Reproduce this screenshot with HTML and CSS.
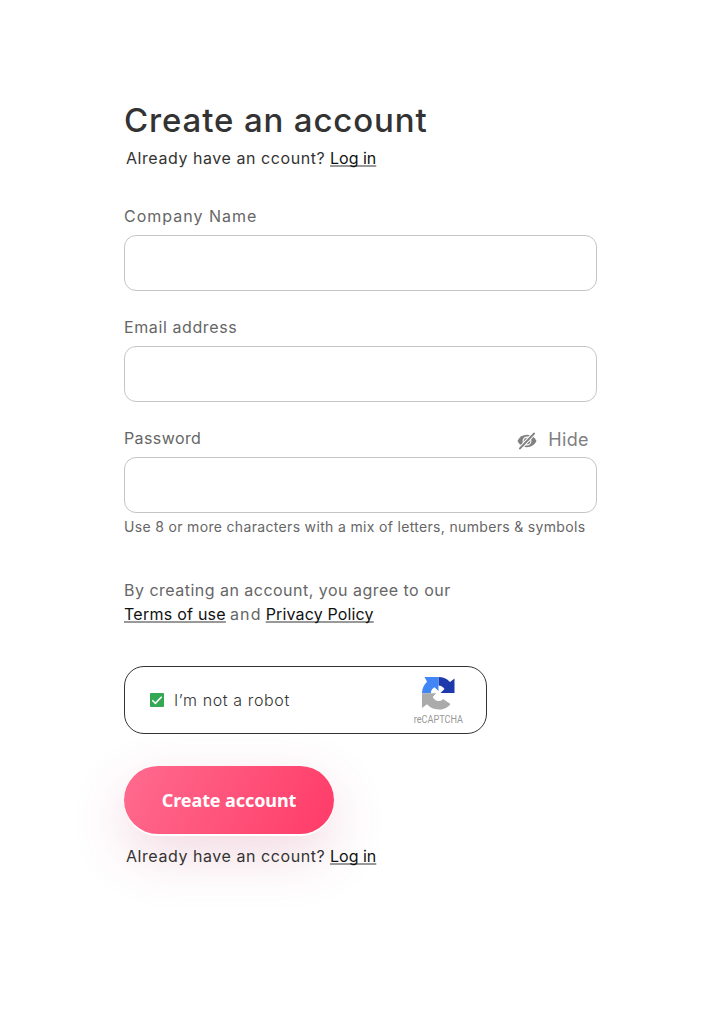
FILE: index.html
```html
<!DOCTYPE html>
<html lang="en">
<head>
<meta charset="utf-8">
<title>Create an account</title>
<link rel="stylesheet" href="styles.css">
</head>
<body>
<main class="signup">
  <h1 class="title">Create an account</h1>
  <p class="login"><span class="login-text">Already have an ccount?</span><a class="link link-login" href="#">Log in</a></p>
  <form class="form">
    <div class="field">
      <label class="label label-company" for="company">Company Name</label>
      <input class="input" id="company" type="text">
    </div>
    <div class="field">
      <label class="label label-email" for="email">Email address</label>
      <input class="input" id="email" type="email">
    </div>
    <div class="field">
      <div class="label-row">
        <label class="label label-password" for="password">Password</label>
        <button class="toggle" type="button">
          <svg class="eye" viewBox="0 0 20 18" width="20" height="18">
            <path fill="#808080" d="M.5 9C2.500 5 5.700 2.800 10 2.800S17.500 5 19.500 9c-2 4-5.200 6.200-9.500 6.200S2.500 13 .5 9Z"/>
            <circle cx="10" cy="9" r="3.900" fill="none" stroke="#fff" stroke-width="1.100"/>
            <path stroke="#fff" stroke-width="4" d="M2 17.500 18 .500"/>
            <path stroke="#808080" stroke-width="2" stroke-linecap="round" d="M3 16.400 17 1.600"/>
          </svg>
          <span class="toggle-text">Hide</span>
        </button>
      </div>
      <input class="input" id="password" type="password">
      <p class="hint">Use 8 or more characters with a mix of letters, numbers &amp; symbols</p>
    </div>
    <div class="terms">
      <p class="terms-line">By creating an account, you agree to our</p>
      <p class="terms-links"><a class="link link-terms" href="#">Terms of use</a><span class="and">and</span><a class="link link-privacy" href="#">Privacy Policy</a></p>
    </div>
    <div class="captcha">
      <svg class="check" viewBox="0 0 14 14" width="14" height="14">
        <rect width="14" height="14" rx="1" fill="#34a853"/>
        <path d="M2.300 7.200 5.400 10.300 11.700 3.800" fill="none" stroke="#fff" stroke-width="1.600"/>
      </svg>
      <span class="robot">I’m not a robot</span>
      <div class="brand">
        <svg viewBox="0 0 33 33" width="33" height="33">
          <path fill="#1c3aa9" d="M16.500 0C21 0 25 1.800 28 5l4.500-3.500V16H18.500l4-4c-1.500-2.200-3.400-3.500-6-3.500Z"/>
          <path fill="#4285f4" d="M16.500 0v14L12.500 10.300C10 11.800 8.800 13.600 8.800 16.300H0C0 12 1.800 8 5 4.800L2.500 0Z"/>
          <path fill="#ababab" d="M0 16.300h14.300L10.700 20c1.500 2.700 3.300 4 6 4 1.900 0 3.400-.7 4.300-2.100l7.500 5.100C25.500 31 21.500 32.500 17 32.500c-5 0-9-1.800-12-5.200L0 31Z"/>
        </svg>
        <span class="brand-name">reCAPTCHA</span>
      </div>
    </div>
    <button class="submit" type="button"><span>Create account</span></button>
  </form>
  <p class="login login-bottom"><span class="login-text">Already have an ccount?</span><a class="link link-login" href="#">Log in</a></p>
</main>
</body>
</html>
```
FILE: styles.css
```css
* { box-sizing: border-box; }
body {
  margin: 0;
  min-height: 100vh;
  background: #fff;
  color: #333;
  font: 16px/24px Inter, "Liberation Sans", sans-serif;
}
h1, p { margin: 0; }
button { font: inherit; border: 0; padding: 0; background: none; cursor: pointer; }
.signup { width: 473px; min-height: 100vh; margin-left: 124px; padding-top: 96px; white-space: nowrap; }
.title { font-size: 33px; font-weight: 500; line-height: 48px; letter-spacing: 0.86px; }
.login { display: flex; gap: 5px; margin: 2px 0 0 2px; }
.login-text { width: 199px; letter-spacing: 0.56px; }
.link {
  color: #111;
  text-decoration: underline;
  text-decoration-color: #999;
  text-decoration-thickness: 2px;
  text-underline-offset: 1px;
  text-decoration-skip-ink: none;
}
.form { display: flex; flex-direction: column; margin-top: 34px; }
.field { display: flex; flex-direction: column; margin-bottom: 24px; }
.label { color: #666; margin-bottom: 7px; }
.label-company { letter-spacing: 1px; }
.label-email { letter-spacing: 0.6px; }
.label-password { letter-spacing: 0.4px; }
.label-row { display: flex; justify-content: space-between; }
.input {
  width: 100%;
  height: 56px;
  padding: 0 16px;
  border: 1px solid #c5c5c5;
  border-radius: 12px;
  background: #fff;
  font: inherit;
  outline: none;
}
.toggle { display: flex; align-items: center; gap: 11px; height: 27px; margin-right: 8px; color: #808080; }
.eye { margin-top: 2px; }
.toggle-text { font-size: 18px; letter-spacing: 0.4px; }
.hint { margin-top: 3px; color: #666; font-size: 14px; line-height: 21px; letter-spacing: 0.33px; }
.terms { margin-top: 17px; color: #666; }
.terms-line { letter-spacing: 0.48px; }
.terms-links { display: flex; gap: 4px; }
.link-terms { letter-spacing: 0.25px; }
.and { letter-spacing: 1.2px; }
.link-privacy { letter-spacing: 0.15px; }
.captcha {
  display: flex;
  align-items: center;
  width: 363px;
  height: 68px;
  margin-top: 40px;
  padding: 0 23px 0 25px;
  border: 1px solid #333;
  border-radius: 20px;
}
.robot { margin-left: 10px; font-weight: 300; letter-spacing: 0.62px; }
.brand { display: flex; flex-direction: column; align-items: center; width: 49px; margin: 2px 0 0 auto; }
.brand-name { margin-top: 4px; color: #999; font: 10.5px/12px Roboto, sans-serif; transform: scaleX(0.87); }
.submit {
  width: 210px;
  height: 68px;
  margin-top: 32px;
  border-radius: 34px;
  background: linear-gradient(115deg, #ff6b8e, #ff3b68);
  color: #fff;
  font: bold 18px/24px "Noto Sans", sans-serif;
  letter-spacing: -0.1px;
  box-shadow: 0 2px 0 #fff, 0 20px 56px rgba(190, 60, 100, 0.2);
}
.login-bottom { position: relative; margin-top: 10px; }
```
